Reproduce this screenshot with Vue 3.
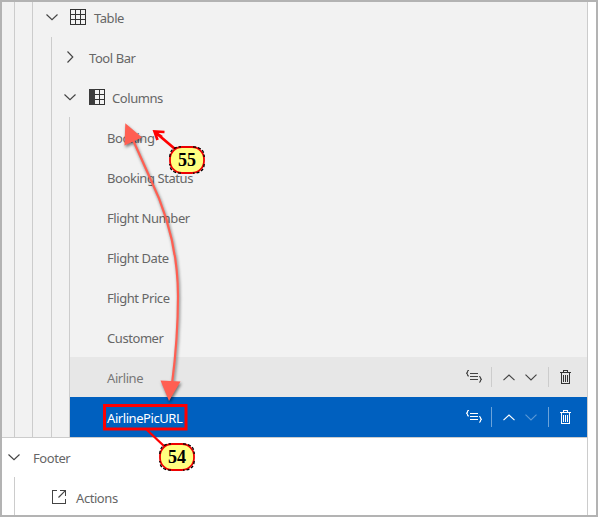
<script setup>
const columns = ['Booking', 'Booking Status', 'Flight Number', 'Flight Date', 'Flight Price', 'Customer', 'Airline', 'AirlinePicURL']
const badges = [{ n: 55, x: 187, y: 160 }, { n: 54, x: 177, y: 457 }]
</script>

<template>
  <div class="frame">
    <div class="tree">
      <div class="content-section">
        <div class="guide first"><div class="guide second">
          <div class="row table-row">
            <svg class="chev" width="12" height="7" viewBox="0 0 12 7"><path d="M.5 .5 6 5.6 11.5 .5" /></svg>
            <svg class="grid-icon" width="16" height="16" viewBox="0 0 16 16"><path d="M.5.5h15v15H.5zM5.5.5v15M10.5.5v15M.5 5.5h15M.5 10.5h15" /></svg>
            <span class="label">Table</span>
          </div>
          <div class="guide third">
            <div class="row toolbar-row">
              <svg class="chev" width="7" height="12" viewBox="0 0 7 12"><path d="M.5 .5 5.8 6 .5 11.5" /></svg>
              <span class="label">Tool Bar</span>
            </div>
            <div class="row columns-row">
              <svg class="chev" width="12" height="7" viewBox="0 0 12 7"><path d="M.5 .5 6 5.6 11.5 .5" /></svg>
              <svg class="grid-icon" width="16" height="16" viewBox="0 0 16 16"><path d="M.5.5h15v15H.5zM10.5.5v15M5.5 5.5h10M5.5 10.5h10" /><path class="solid" d="M0 0h6v16H0z" /></svg>
              <span class="label">Columns</span>
            </div>
            <div class="guide fourth">
              <div v-for="(name, i) in columns" :key="name" class="row item" :class="{ hovered: i === 6, selected: i === 7 }">
                <span class="label">{{ name }}</span>
                <div v-if="i > 5" class="tools">
                  <svg class="code" width="16" height="14" viewBox="0 0 16 14"><path class="crisp" d="M4 4.500h8M4 7.500h8M4 10.500h8" /><path d="M3 1.500Q1.500 1.300 1.500 2.500V3.200L.5 4.200 1.500 5.200V6Q1.500 7 3 7M13 7.500Q14.500 7.500 14.500 8.500V9.300L15.500 10.300 14.500 11.300V12Q14.500 13.200 13 13.200" /></svg>
                  <i class="divider"></i>
                  <svg class="up" width="12" height="7" viewBox="0 0 12 7"><path d="M.5 6.2 6 1 11.5 6.2" /></svg>
                  <svg class="down" width="12" height="7" viewBox="0 0 12 7"><path d="M.5 .7 6 5.9 11.5 .7" /></svg>
                  <i class="divider second-divider"></i>
                  <svg class="trash" width="11" height="14" viewBox="0 0 11 14"><path d="M0 2.5h11M3.5 2.5v-2h4v2M1.5 3v10.5h8V3M3.5 4.5V12M5.5 4.5V12M7.5 4.5V12" /></svg>
                </div>
              </div>
            </div>
          </div>
        </div></div>
      </div>
      <div class="footer-section">
        <div class="row footer-row">
          <svg class="chev" width="12" height="7" viewBox="0 0 12 7"><path d="M.5 .5 6 5.6 11.5 .5" /></svg>
          <span class="label">Footer</span>
        </div>
        <div class="guide first">
          <div class="row actions-row">
            <svg class="open" width="14" height="14" viewBox="0 0 14 14"><path class="crisp" d="M5 .5H.5v13h13V9M8 .5h5.5V6" /><path d="M6.5 7.5 13.3 .7" /></svg>
            <span class="label">Actions</span>
          </div>
        </div>
      </div>
    </div>

    <svg class="annotations" width="598" height="517" viewBox="0 0 598 517">
      <defs>
        <filter id="shade" x="-30%" y="-10%" width="170%" height="125%" color-interpolation-filters="sRGB">
          <feDropShadow dx="1" dy="2" stdDeviation="1.7" flood-color="#000" flood-opacity=".5" />
        </filter>
      </defs>
      <g filter="url(#shade)">
        <path class="curve" d="M133 140L150 178C167 213 178 252 178 296Q178 338 172 384" />
        <path class="head" d="M125.300 123.300 142 137.500 124.500 145.500ZM169 401 160.500 380.500 180.500 381.500Z" />
      </g>
      <path class="pointer" d="M175 149 155 132M164.500 132 154.500 131.500 157.500 140M155 132 162 137" />
      <path class="connector" d="M146 429 165 447" />
      <rect class="highlight" x="104.500" y="405.500" width="81.500" height="23.500" />
      <g v-for="b in badges" :key="b.n" :transform="`translate(${b.x} ${b.y})`">
        <rect class="badge" x="-17" y="-13" width="34" height="26" rx="12" />
        <path class="badge-rim" d="M-17.200-3Q-17-13.200-6-13.200M6-13.200Q17.200-13 17.200-3M17.200 4Q17 13.200 6 13.200M-6 13.200Q-17.200 13-17.200 4" />
        <text x="0" y="6">{{ b.n }}</text>
      </g>
    </svg>
  </div>
</template>

<style>
body { margin: 0; overflow: hidden; }
</style>

<style scoped>
.frame { position: relative; box-sizing: border-box; width: 598px; height: 517px; border: 2px solid #b3b3b3; background: #fff; overflow: hidden; }
.tree { width: 585px; height: 513px; border-right: 1px solid #ccc; overflow: hidden; font: 13px "Noto Sans", "Open Sans", sans-serif; letter-spacing: -.43px; color: #666; }
.content-section { height: 435px; background: #f2f2f2; border-bottom: 1px solid #ccc; overflow: hidden; }
.guide { border-left: 1px solid #ccc; }
.first { margin-left: 12px; }
.second { margin-left: 17px; }
.third { margin-left: 18px; }
.fourth { margin-left: 17px; }
.row { display: flex; align-items: center; box-sizing: border-box; height: 40px; }
.label { line-height: 20px; white-space: nowrap; padding-top: 2px; }
svg { display: block; flex: none; fill: none; stroke: #444; stroke-width: 1.15; }
.grid-icon { shape-rendering: crispEdges; stroke-width: 1; stroke: #333; margin-left: 12px; }
.solid { fill: #3c3c3c; stroke: none; }
.crisp { shape-rendering: crispEdges; stroke-width: 1; }
.table-row { margin-top: -5px; padding-left: 13px; }
.table-row .label { margin-left: 8px; }
.toolbar-row { padding-left: 15px; }
.toolbar-row .label { margin-left: 15px; }
.columns-row { padding-left: 12px; }
.columns-row .grid-icon { margin-left: 13px; }
.columns-row .label { margin-left: 7px; }
.item { padding: 0 14px 0 37px; justify-content: space-between; }
.hovered { background: #e7e7e7; color: #777; }
.selected { background: #0060bf; color: #fff; }
.tools { display: flex; align-items: center; }
.code { margin-right: 9px; margin-top: -2px; }
.divider { width: 1px; height: 20px; background: #ccc; margin-top: -1px; }
.up { margin-left: 11px; }
.down { margin-left: 10px; }
.second-divider { margin-left: 11px; }
.trash { margin-left: 11px; margin-right: 2px; stroke-width: 1; shape-rendering: crispEdges; stroke: #333; }
.selected svg { stroke: #fff; }
.selected .down { opacity: .35; }
.selected .divider { background: #6ba3da; }
.footer-row { height: 39px; padding-left: 6px; }
.footer-row .label { margin-left: 13px; padding-top: 0; }
.actions-row { padding-left: 37px; }
.actions-row .label { margin-left: 10px; }
.annotations { position: absolute; left: -2px; top: -2px; }
.curve { stroke: #ff5f52; stroke-width: 2.2; }
.head { fill: #ff5f52; stroke: none; }
.pointer { stroke: #f00; stroke-width: 2.7; }
.connector { stroke: #f00; stroke-width: 2.3; }
.highlight { stroke: #f00; stroke-width: 3; }
.badge { fill: #ffff80; stroke: #e00; stroke-width: 1.8; }
.badge-rim { stroke: #000; stroke-width: 1.3; stroke-dasharray: 3 2; }
text { fill: #000; stroke: none; text-anchor: middle; font: bold 18px "Liberation Serif", serif; }
</style>
